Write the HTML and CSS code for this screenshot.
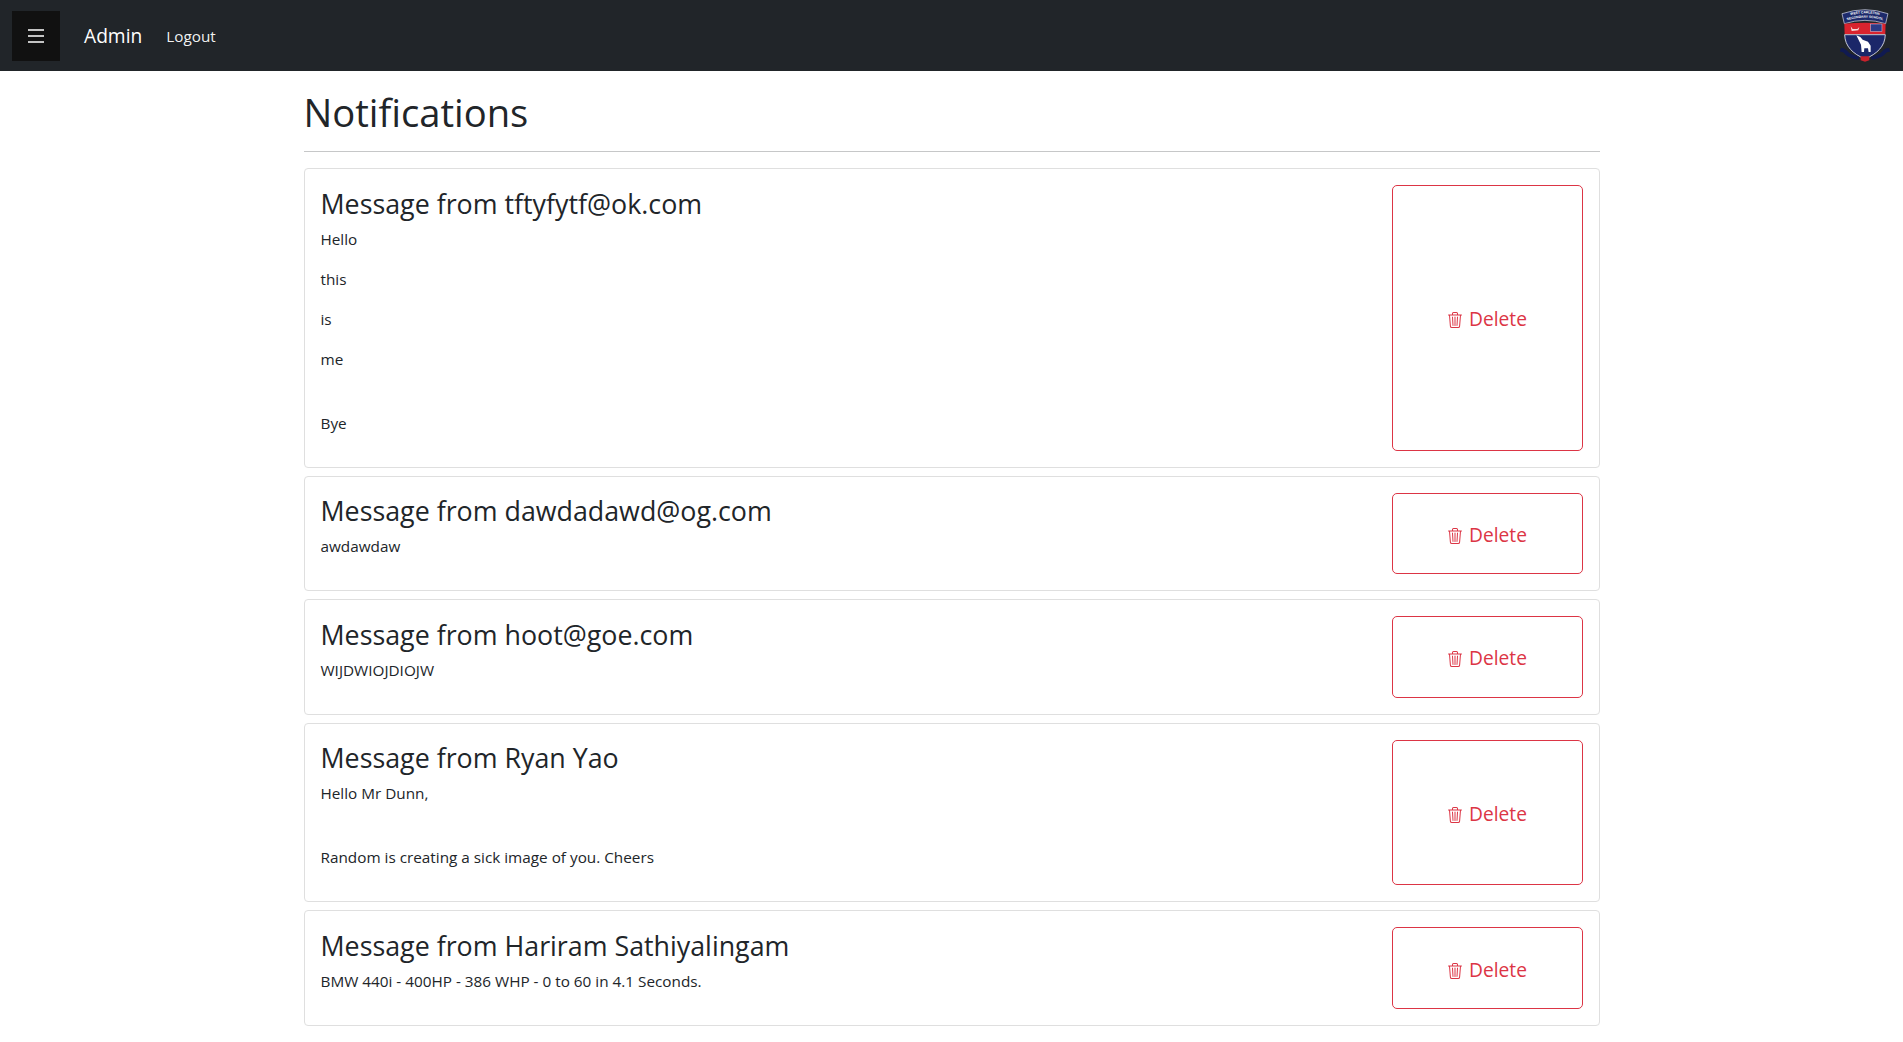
FILE: index.html
```html
<!DOCTYPE html>
<html lang="en">
<head>
<meta charset="utf-8">
<title>Notifications</title>
<link rel="stylesheet" href="styles.css">
</head>
<body>
<svg class="sprite" width="0" height="0" aria-hidden="true">
  <symbol id="trash" viewBox="0 0 16 16">
    <path fill="currentColor" d="M6.5 1h3a.5.5 0 0 1 .5.5v1H6v-1a.5.5 0 0 1 .5-.5ZM11 2.5v-1A1.5 1.5 0 0 0 9.5 0h-3A1.5 1.5 0 0 0 5 1.5v1H2.506a.58.58 0 0 0-.01 0H1.5a.5.5 0 0 0 0 1h.538l.853 10.66A2 2 0 0 0 4.885 16h6.23a2 2 0 0 0 1.994-1.84l.853-10.66h.538a.5.5 0 0 0 0-1h-.995a.59.59 0 0 0-.01 0H11Zm1.958 1-.846 10.58a1 1 0 0 1-.997.92h-6.23a1 1 0 0 1-.997-.92L3.042 3.5h9.916Zm-7.487 1a.5.5 0 0 1 .528.47l.5 8.5a.5.5 0 0 1-.998.06L5 5.03a.5.5 0 0 1 .47-.53Zm5.058 0a.5.5 0 0 1 .47.53l-.5 8.5a.5.5 0 1 1-.998-.06l.5-8.5a.5.5 0 0 1 .528-.47ZM8 4.5a.5.5 0 0 1 .5.5v8.5a.5.5 0 0 1-1 0V5a.5.5 0 0 1 .5-.5Z"/>
  </symbol>
</svg>
<header class="navbar">
  <div class="nav-left">
    <button class="menu-btn" type="button" aria-label="Menu">
      <svg class="burger" viewBox="0 0 16 14"><path d="M0 1H16M0 7H16M0 13H16" stroke="currentColor" stroke-width="1.300"/></svg>
    </button>
    <span class="brand">Admin</span>
    <a class="nav-link" href="#">Logout</a>
  </div>
  <svg class="crest" viewBox="50 22 160 170" role="img" aria-label="West Carleton Secondary School crest">
    <path d="M56 42 Q125 18 194 42 L187 72 Q125 52 63 72 Z" fill="#1d2a6b" stroke="#dfe2f0" stroke-width="2"/>
    <path d="M63 72 Q125 66 187 72 L186 104 H64 Z" fill="#d9232e"/>
    <rect x="142" y="73" width="34" height="22" fill="#2b3a86" stroke="#c9cde6" stroke-width="1.500"/>
    <path d="M82 80 l6 8 l14 0 l6 -6 l-3 10 l-20 2 Z" fill="#f6dede"/>
    <path d="M64 105 H186 C185 140 162 162 125 178 C88 162 65 140 64 105 Z" fill="#1b2769" stroke="#e8e9f2" stroke-width="2.500"/>
    <path d="M99 107 L111 112 L118 120 L134 126 L142 138 L142 157 L136 157 L134 146 L123 146 L122 157 L115 157 L113 135 Z" fill="#fff"/>
    <path d="M52 146 C62 142 68 150 78 160 C88 166 100 168 108 172 L104 180 C88 178 72 172 62 160 C58 156 54 156 50 156 Z" fill="#101a52"/>
    <path d="M198 146 C188 142 182 150 172 160 C162 166 150 168 142 172 L146 180 C162 178 178 172 188 160 C192 156 196 156 200 156 Z" fill="#101a52"/>
    <path d="M112 170 H138 V182 L125 186 L112 182 Z" fill="#c7222c"/>
    <path id="crest-arc" d="M62 52 Q125 30 188 52" fill="none"/>
    <text class="crest-text"><textPath href="#crest-arc" startOffset="50%" text-anchor="middle">WEST CARLETON</textPath></text>
    <path id="crest-arc2" d="M64 64 Q125 44 186 64" fill="none"/>
    <text class="crest-text"><textPath href="#crest-arc2" startOffset="50%" text-anchor="middle">SECONDARY SCHOOL</textPath></text>
  </svg>
</header>
<main class="container">
  <h1 class="title">Notifications</h1>
  <hr class="rule">
  <section class="card">
    <div class="body">
      <h3 class="from">Message from tftyfytf@ok.com</h3>
      <p class="line">Hello</p>
      <p class="line">this</p>
      <p class="line">is</p>
      <p class="line">me</p>
      <br>
      <p class="line">Bye</p>
    </div>
    <button class="del" type="button"><svg class="ico"><use href="#trash"/></svg> Delete</button>
  </section>
  <section class="card">
    <div class="body">
      <h3 class="from">Message from dawdadawd@og.com</h3>
      <p class="line">awdawdaw</p>
    </div>
    <button class="del" type="button"><svg class="ico"><use href="#trash"/></svg> Delete</button>
  </section>
  <section class="card">
    <div class="body">
      <h3 class="from">Message from hoot@goe.com</h3>
      <p class="line">WIJDWIOJDIOJW</p>
    </div>
    <button class="del" type="button"><svg class="ico"><use href="#trash"/></svg> Delete</button>
  </section>
  <section class="card">
    <div class="body">
      <h3 class="from">Message from Ryan Yao</h3>
      <p class="line">Hello Mr Dunn,</p>
      <br>
      <p class="line">Random is creating a sick image of you. Cheers</p>
    </div>
    <button class="del" type="button"><svg class="ico"><use href="#trash"/></svg> Delete</button>
  </section>
  <section class="card">
    <div class="body">
      <h3 class="from">Message from Hariram Sathiyalingam</h3>
      <p class="line">BMW 440i - 400HP - 386 WHP - 0 to 60 in 4.1 Seconds.</p>
    </div>
    <button class="del" type="button"><svg class="ico"><use href="#trash"/></svg> Delete</button>
  </section>
</main>
</body>
</html>
```
FILE: styles.css
```css
* { box-sizing: border-box; }
html, body { margin: 0; }
body {
  font-family: "Open Sans", "Noto Sans", "Liberation Sans", sans-serif;
  font-size: 15.3px;
  line-height: 24px;
  color: #212529;
  background: #fff;
}
.sprite { position: absolute; }
.navbar {
  height: 71px;
  background: #212529;
  display: flex;
  align-items: center;
  justify-content: space-between;
  padding: 0 10px 0 12px;
}
.nav-left { display: flex; align-items: center; }
.menu-btn {
  width: 48px;
  height: 50px;
  background: #111;
  border: 0;
  color: #fff;
  padding: 0;
  display: flex;
  align-items: center;
  justify-content: center;
}
.burger { width: 16px; height: 14px; display: block; }
.brand { color: #fff; font-size: 19.2px; margin-left: 24px; }
.nav-link { color: rgba(255,255,255,.95); text-decoration: none; font-size: 15.3px; margin-left: 24px; }
.crest { width: 53.3px; height: 56.7px; display: block; }
.crest-text { font-family: "Liberation Sans", sans-serif; font-size: 10px; font-weight: 700; fill: #fff; }
.container { width: 1296px; margin: 0 auto; }
.title { font-size: 38.2px; line-height: 48px; font-weight: 400; margin: 0; padding-top: 17px; }
.rule { height: 1px; border: 0; background: #c6c7c8; margin: 15px 0 16px; }
.card {
  display: flex;
  gap: 16px;
  border: 1px solid #dfdfdf;
  border-radius: 4px;
  padding: 16px;
  margin-bottom: 8px;
}
.body { flex: 1; min-width: 0; }
.from { font-size: 26.8px; line-height: 33.6px; font-weight: 400; margin: 0 0 6.5px; padding-top: 1.5px; }
.line { margin: 0 0 16px; }
.del {
  width: 191px;
  background: #fff;
  color: #dc3545;
  border: 1px solid #dc3545;
  border-radius: 5px;
  font: inherit;
  font-size: 19.2px;
  padding: 3px 0 0;
}
.ico { width: 16px; height: 16px; vertical-align: -2px; margin-right: 1px; }
```
